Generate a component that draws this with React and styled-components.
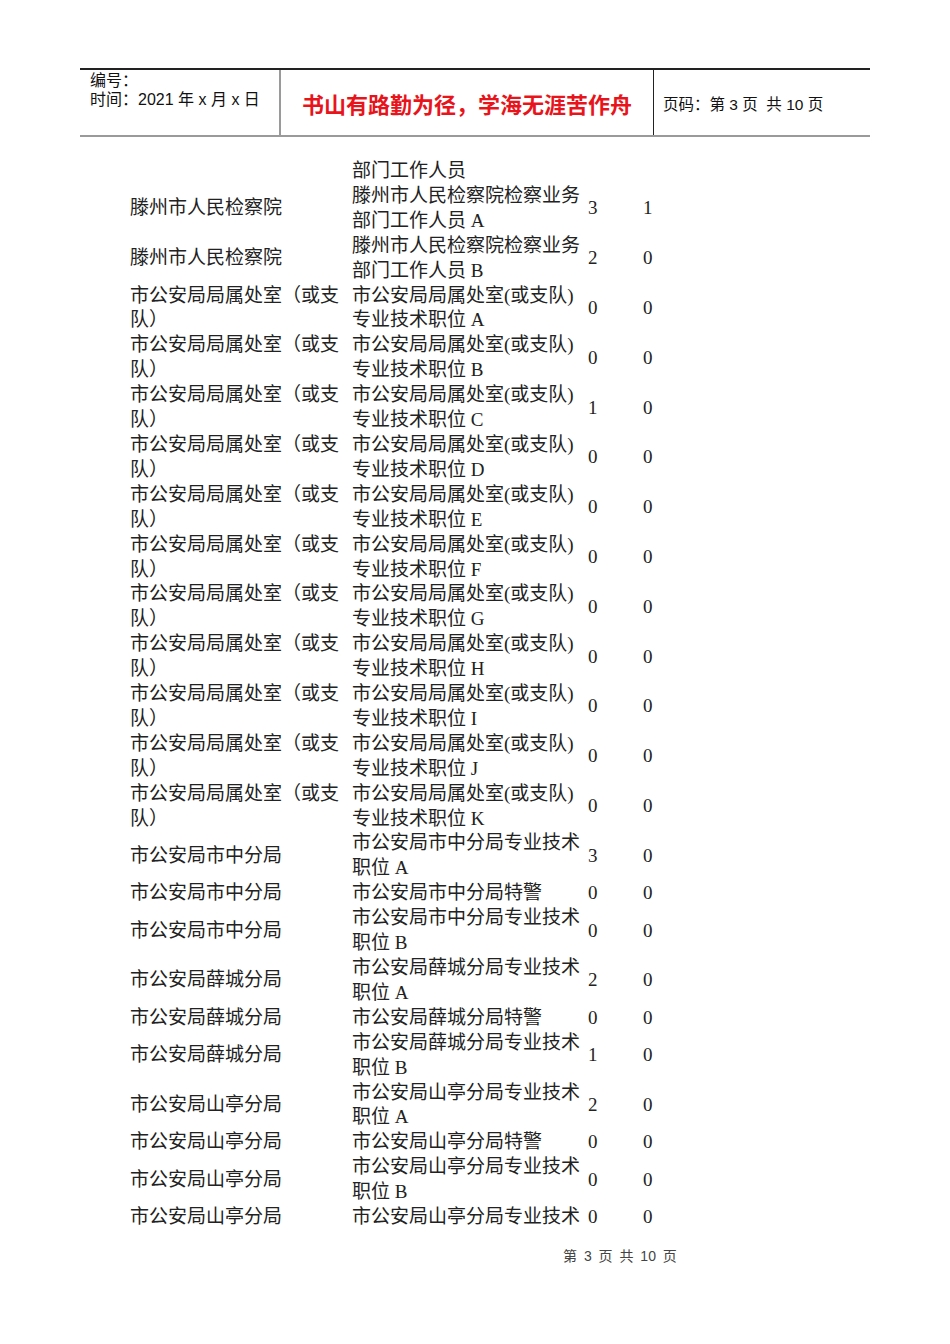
import React from "react";
import styled, { createGlobalStyle } from "styled-components";

const GlobalStyle = createGlobalStyle`
    html, body {
        margin: 0;
        padding: 0;
        background: #ffffff;
    }
    body {
        font-family: "Liberation Serif", "Noto Sans CJK SC", serif;
        color: #111;
    }
`;

const rows = [
    { unit: "", post: "部门工作人员", plan: "", hired: "" },
    { unit: "滕州市人民检察院", post: "滕州市人民检察院检察业务部门工作人员 A", plan: "3", hired: "1" },
    { unit: "滕州市人民检察院", post: "滕州市人民检察院检察业务部门工作人员 B", plan: "2", hired: "0" },
    ...["A", "B", "C", "D", "E", "F", "G", "H", "I", "J", "K"].map((k) => ({
        unit: "市公安局局属处室（或支队）",
        post: `市公安局局属处室(或支队)专业技术职位 ${k}`,
        plan: k === "C" ? "1" : "0",
        hired: "0",
    })),
    { unit: "市公安局市中分局", post: "市公安局市中分局专业技术职位 A", plan: "3", hired: "0" },
    { unit: "市公安局市中分局", post: "市公安局市中分局特警", plan: "0", hired: "0" },
    { unit: "市公安局市中分局", post: "市公安局市中分局专业技术职位 B", plan: "0", hired: "0" },
    { unit: "市公安局薛城分局", post: "市公安局薛城分局专业技术职位 A", plan: "2", hired: "0" },
    { unit: "市公安局薛城分局", post: "市公安局薛城分局特警", plan: "0", hired: "0" },
    { unit: "市公安局薛城分局", post: "市公安局薛城分局专业技术职位 B", plan: "1", hired: "0" },
    { unit: "市公安局山亭分局", post: "市公安局山亭分局专业技术职位 A", plan: "2", hired: "0" },
    { unit: "市公安局山亭分局", post: "市公安局山亭分局特警", plan: "0", hired: "0" },
    { unit: "市公安局山亭分局", post: "市公安局山亭分局专业技术职位 B", plan: "0", hired: "0" },
    { unit: "市公安局山亭分局", post: "市公安局山亭分局专业技术", plan: "0", hired: "0" },
];

const App = () => {
    return (
        <Page>
            <GlobalStyle />
            <Header>
                <MetaCell>
                    <MetaLine>编号：</MetaLine>
                    <MetaLine>时间：2021 年 x 月 x 日</MetaLine>
                </MetaCell>
                <MottoCell>书山有路勤为径，学海无涯苦作舟</MottoCell>
                <PageCell>页码：第 3 页&nbsp; 共 10 页</PageCell>
            </Header>
            <Table>
                {rows.map((r, i) => (
                    <Row key={i}>
                        <UnitCell>{r.unit}</UnitCell>
                        <PostCell>{r.post}</PostCell>
                        <NumCell>{r.plan}</NumCell>
                        <NumCell>{r.hired}</NumCell>
                    </Row>
                ))}
            </Table>
            <Footer>第 3 页 共 10 页</Footer>
        </Page>
    );
};

const Page = styled.div`
    width: 950px;
    min-height: 1344px;
    padding-top: 68px;
    box-sizing: border-box;
`;

const Header = styled.div`
    display: grid;
    grid-template-columns: 201px 373px 1fr;
    width: 790px;
    height: 69px;
    margin-left: 80px;
    box-sizing: border-box;
    border-top: 2px solid #222;
    border-bottom: 2px solid #9a9a9a;
    font-family: "Liberation Sans", "Noto Sans CJK SC", sans-serif;
`;

const MetaCell = styled.div`
    display: flex;
    flex-direction: column;
    padding: 1px 0 0 10px;
    border-right: 2px solid #9a9a9a;
    font-size: 16px;
    color: #111;
`;

const MetaLine = styled.div`
    line-height: 19px;
    white-space: nowrap;
`;

const MottoCell = styled.div`
    display: flex;
    align-items: center;
    justify-content: center;
    padding-top: 1px;
    font-size: 22px;
    font-weight: 700;
    color: #e8141b;
    border-right: 1px solid #222;
    white-space: nowrap;
`;

const PageCell = styled.div`
    display: flex;
    align-items: center;
    padding: 1px 0 0 9px;
    font-size: 15.5px;
    color: #111;
    white-space: nowrap;
`;

const Table = styled.div`
    display: flex;
    flex-direction: column;
    margin: 22px 0 0 130px;
    font-size: 19px;
    line-height: 24.9px;
`;

const Row = styled.div`
    display: grid;
    grid-template-columns: 222px 236px 55px 60px;
    align-items: center;
`;

const UnitCell = styled.div`
    color: #222;
`;

const PostCell = styled.div`
    color: #222;
`;

const NumCell = styled.div`
    color: #222;
`;

const Footer = styled.div`
    margin: 17px 0 0 563px;
    font-family: "Liberation Sans", "Noto Sans CJK SC", sans-serif;
    font-size: 14px;
    line-height: 18px;
    color: #444;
    word-spacing: 3px;
`;

export default App;
